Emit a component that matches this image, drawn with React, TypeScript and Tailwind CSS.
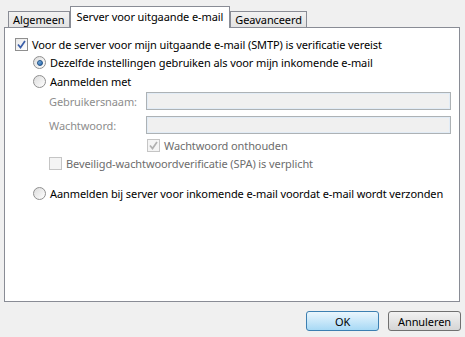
import React from 'react';

const FONT = { fontFamily: '"Noto Sans", "Open Sans", sans-serif' };

function CheckBox({ checked, disabled }: { checked?: boolean; disabled?: boolean }) {
  return (
    <span
      className={`flex h-[13px] w-[13px] shrink-0 items-center justify-center border ${
        disabled ? 'border-[#c5c5c5] bg-[#f4f4f4]' : 'border-[#8f8f8f] bg-gradient-to-br from-[#e8e8e8] to-white'
      }`}
    >
      {checked && (
        <svg width="9" height="9" viewBox="0 0 9 9">
          <path
            d="M1 4.5 L3.5 7.5 L8 1"
            fill="none"
            stroke={disabled ? '#b0b0b0' : '#3a5ea8'}
            strokeWidth="1.7"
          />
        </svg>
      )}
    </span>
  );
}

function Radio({ checked }: { checked?: boolean }) {
  return (
    <span className="flex h-[13px] w-[13px] shrink-0 items-center justify-center rounded-full border border-[#8f8f8f] bg-gradient-to-br from-[#dcdcdc] to-white">
      {checked && (
        <span className="h-[6px] w-[6px] rounded-full border border-[#1d4f85] bg-gradient-to-br from-[#8cc0ec] to-[#1f62a8]" />
      )}
    </span>
  );
}

function Tab({ label, active }: { label: string; active?: boolean }) {
  return active ? (
    <div className="relative z-10 -mb-px flex h-[22px] items-center border border-b-0 border-[#898c95] bg-white px-[6px] pb-[2px] text-black">
      {label}
    </div>
  ) : (
    <div className="flex h-[16px] items-center border border-b-0 border-[#898c95] bg-gradient-to-b from-[#f2f2f2] to-[#e3e3e3] px-[4px] text-black">
      {label}
    </div>
  );
}

function Field({ label }: { label: string }) {
  return (
    <div className="flex items-center">
      <span className="w-[97px] text-[#8d8d8d]">{label}</span>
      <div className="h-[18px] w-[305px] border border-[#adb2b5] bg-[#f0f0f0] shadow-[inset_0_0_0_1px_#e2ecf6]" />
    </div>
  );
}

export default function App() {
  return (
    <div style={FONT} className="flex h-[337px] w-[465px] flex-col bg-[#f0f0f0] text-[11px] leading-none tracking-[-0.1px] text-black">
      <div className="flex items-end pl-[8px] pt-[6px]">
        <Tab label="Algemeen" />
        <Tab label="Server voor uitgaande e-mail" active />
        <Tab label="Geavanceerd" />
      </div>
      <div className="ml-[4px] flex h-[275px] w-[456px] flex-col border border-[#898c95] bg-white pl-[10px] pt-[10px]">
        <label className="flex items-center gap-[4px]">
          <CheckBox checked />
          <span>Voor de server voor mijn uitgaande e-mail (SMTP) is verificatie vereist</span>
        </label>
        <div className="flex flex-col pl-[18px]">
          <label className="mt-[5px] flex items-center gap-[4px]">
            <Radio checked />
            <span>Dezelfde instellingen gebruiken als voor mijn inkomende e-mail</span>
          </label>
          <label className="mt-[6px] flex items-center gap-[4px]">
            <Radio />
            <span>Aanmelden met</span>
          </label>
          <div className="mt-[4px] flex flex-col gap-[6px] pl-[16px]">
            <Field label="Gebruikersnaam:" />
            <Field label="Wachtwoord:" />
          </div>
          <label className="mt-[5px] flex items-center gap-[4px] pl-[114px] text-[#6d6d6d]">
            <CheckBox checked disabled />
            <span>Wachtwoord onthouden</span>
          </label>
          <label className="mt-[5px] flex items-center gap-[4px] pl-[16px] text-[#6d6d6d]">
            <CheckBox disabled />
            <span>Beveiligd-wachtwoordverificatie (SPA) is verplicht</span>
          </label>
          <label className="mt-[17px] flex items-center gap-[4px]">
            <Radio />
            <span>Aanmelden bij server voor inkomende e-mail voordat e-mail wordt verzonden</span>
          </label>
        </div>
      </div>
      <div className="mt-[9px] flex justify-end gap-[9px] pr-[4px]">
        <button className="h-[20px] w-[73px] rounded-[3px] border border-[#3c7fb1] bg-gradient-to-b from-[#eaf6fd] to-[#a7d9f5] text-black">
          OK
        </button>
        <button className="h-[20px] w-[73px] rounded-[3px] border border-[#707070] bg-gradient-to-b from-[#f2f2f2] to-[#d5d5d5] text-black">
          Annuleren
        </button>
      </div>
    </div>
  );
}
